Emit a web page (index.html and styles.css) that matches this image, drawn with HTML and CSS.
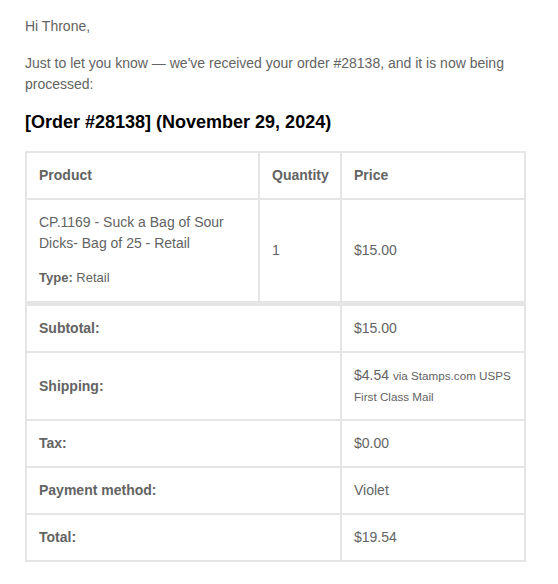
FILE: index.html
```html
<!DOCTYPE html>
<html>
<head>
<meta charset="utf-8">
<link rel="stylesheet" href="styles.css">
</head>
<body>
<div class="content">
  <p class="text">Hi Throne,</p>
  <p class="text">Just to let you know — we've received your order #28138, and it is now being processed:</p>
  <h2 class="order-title">[Order #28138] (November 29, 2024)</h2>
  <table class="td">
    <thead>
      <tr>
        <th class="cell col-product">Product</th>
        <th class="cell col-qty">Quantity</th>
        <th class="cell col-price">Price</th>
      </tr>
    </thead>
    <tbody>
      <tr>
        <td class="cell">CP.1169 - Suck a Bag of Sour Dicks- Bag of 25 - Retail
          <ul class="wc-item-meta"><li><strong class="meta-label">Type:</strong> Retail</li></ul>
        </td>
        <td class="cell">1</td>
        <td class="cell">$15.00</td>
      </tr>
    </tbody>
    <tfoot>
      <tr class="first">
        <th class="cell" colspan="2">Subtotal:</th>
        <td class="cell">$15.00</td>
      </tr>
      <tr>
        <th class="cell" colspan="2">Shipping:</th>
        <td class="cell">$4.54 <small class="shipped-via">via Stamps.com USPS First Class Mail</small></td>
      </tr>
      <tr>
        <th class="cell" colspan="2">Tax:</th>
        <td class="cell">$0.00</td>
      </tr>
      <tr>
        <th class="cell" colspan="2">Payment method:</th>
        <td class="cell">Violet</td>
      </tr>
      <tr>
        <th class="cell" colspan="2">Total:</th>
        <td class="cell">$19.54</td>
      </tr>
    </tfoot>
  </table>
</div>
</body>
</html>
```
FILE: styles.css
```css
html, body {
  margin: 0;
  padding: 0;
  background: #ffffff;
}
body {
  font-family: "Liberation Sans", Arial, Helvetica, sans-serif;
  font-size: 14px;
  color: #636363;
}
.content {
  width: 501px;
  padding: 16px 0 0 25px;
}
.text {
  margin: 0 0 16px;
  line-height: 21px;
}
.order-title {
  color: #000000;
  font-size: 18px;
  line-height: 23.4px;
  font-weight: bold;
  margin: 0 0 17px;
}
.td {
  width: 501px;
  table-layout: fixed;
  border: 1px solid #e5e5e5;
  border-collapse: separate;
  border-spacing: 0;
  color: #636363;
  font-size: 14px;
}
.cell {
  border: 1px solid #e5e5e5;
  padding: 12px;
  text-align: left;
  vertical-align: middle;
  line-height: 21px;
}
th.cell {
  font-weight: bold;
}
.col-product {
  width: 207px;
}
.col-qty {
  width: 56px;
}
.first .cell {
  border-top-width: 4px;
}
.wc-item-meta {
  font-size: 13px;
  line-height: 22px;
  margin: 13px 0 0;
  padding: 0;
  list-style: none;
}
.shipped-via {
  font-size: 11.67px;
  line-height: 21px;
}
```
